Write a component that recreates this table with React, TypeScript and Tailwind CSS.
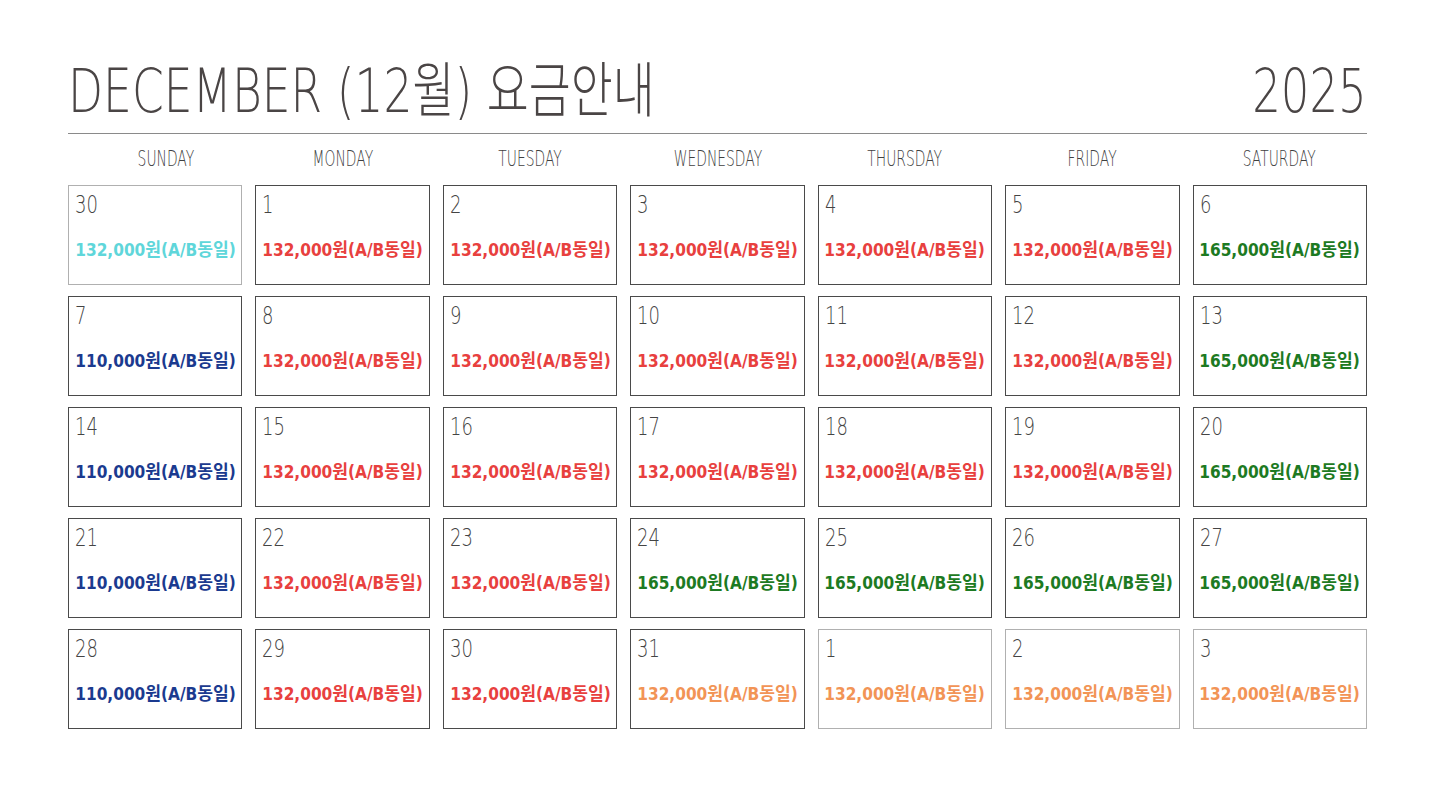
const BORDER_DARK = 'border-[#4a4a4a]';
const BORDER_LIGHT = 'border-[#b0b0b0]';

type Cell = { day: number; price: string; color: string; other?: boolean };

const RED = 'text-[#e8403e]';
const CYAN = 'text-[#5fd6da]';
const NAVY = 'text-[#1b3a8f]';
const GREEN = 'text-[#1d7a22]';
const ORANGE = 'text-[#f29456]';

const P132 = '132,000원';
const P110 = '110,000원';
const P165 = '165,000원';

const cells: Cell[] = [
  { day: 30, price: P132, color: CYAN, other: true },
  { day: 1, price: P132, color: RED },
  { day: 2, price: P132, color: RED },
  { day: 3, price: P132, color: RED },
  { day: 4, price: P132, color: RED },
  { day: 5, price: P132, color: RED },
  { day: 6, price: P165, color: GREEN },
  { day: 7, price: P110, color: NAVY },
  { day: 8, price: P132, color: RED },
  { day: 9, price: P132, color: RED },
  { day: 10, price: P132, color: RED },
  { day: 11, price: P132, color: RED },
  { day: 12, price: P132, color: RED },
  { day: 13, price: P165, color: GREEN },
  { day: 14, price: P110, color: NAVY },
  { day: 15, price: P132, color: RED },
  { day: 16, price: P132, color: RED },
  { day: 17, price: P132, color: RED },
  { day: 18, price: P132, color: RED },
  { day: 19, price: P132, color: RED },
  { day: 20, price: P165, color: GREEN },
  { day: 21, price: P110, color: NAVY },
  { day: 22, price: P132, color: RED },
  { day: 23, price: P132, color: RED },
  { day: 24, price: P165, color: GREEN },
  { day: 25, price: P165, color: GREEN },
  { day: 26, price: P165, color: GREEN },
  { day: 27, price: P165, color: GREEN },
  { day: 28, price: P110, color: NAVY },
  { day: 29, price: P132, color: RED },
  { day: 30, price: P132, color: RED },
  { day: 31, price: P132, color: ORANGE },
  { day: 1, price: P132, color: ORANGE, other: true },
  { day: 2, price: P132, color: ORANGE, other: true },
  { day: 3, price: P132, color: ORANGE, other: true },
];

const weekdays = ['SUNDAY', 'MONDAY', 'TUESDAY', 'WEDNESDAY', 'THURSDAY', 'FRIDAY', 'SATURDAY'];

const thin = "font-['DejaVu_Sans','Noto_Sans_CJK_KR',sans-serif] font-extralight";
const narrow = "font-['DejaVu_Sans_Condensed','Noto_Sans_CJK_KR',sans-serif]";

export default function App() {
  return (
    <div className="w-[1435px] h-[798px] bg-white overflow-hidden px-[68px] pt-[51px]">
      <div className="flex items-end justify-between h-[70px]">
        <h1 className={`${thin} text-[60px] leading-none text-[#4a4545] origin-left scale-x-[0.76] whitespace-nowrap`}>
          DECEMBER (12월) 요금안내
        </h1>
        <div className={`${thin} text-[60px] leading-none text-[#4a4545] origin-right scale-x-[0.75]`}>2025</div>
      </div>
      <div className="mt-[12px] h-px bg-[#8a8a8a]" />
      <div className="grid grid-cols-7 gap-x-[13px] h-[51px] items-center">
        {weekdays.map((d, i) => (
          <div key={d} className={`text-center ${i === 0 ? 'pl-[22px]' : ''}`}>
            <span className={`${thin} inline-block text-[21px] leading-none text-[#3f3f3f] scale-x-[0.66]`}>{d}</span>
          </div>
        ))}
      </div>
      <div className="grid grid-cols-7 gap-x-[13px] gap-y-[11px]">
        {cells.map((c, i) => (
          <div
            key={i}
            className={`h-[100px] border ${c.other ? BORDER_LIGHT : BORDER_DARK} px-[6px] pt-[6px] flex flex-col`}
          >
            <div className={`${thin} text-[24px] leading-[26px] text-[#444] origin-left scale-x-[0.75]`}>{c.day}</div>
            <div className="flex-1 flex items-center justify-center -mt-[3px]">
              <span className={`${narrow} ${c.color} font-bold text-[18px] whitespace-nowrap inline-block scale-x-[0.95]`}>
                {c.price}(A/B동일)
              </span>
            </div>
          </div>
        ))}
      </div>
    </div>
  );
}
